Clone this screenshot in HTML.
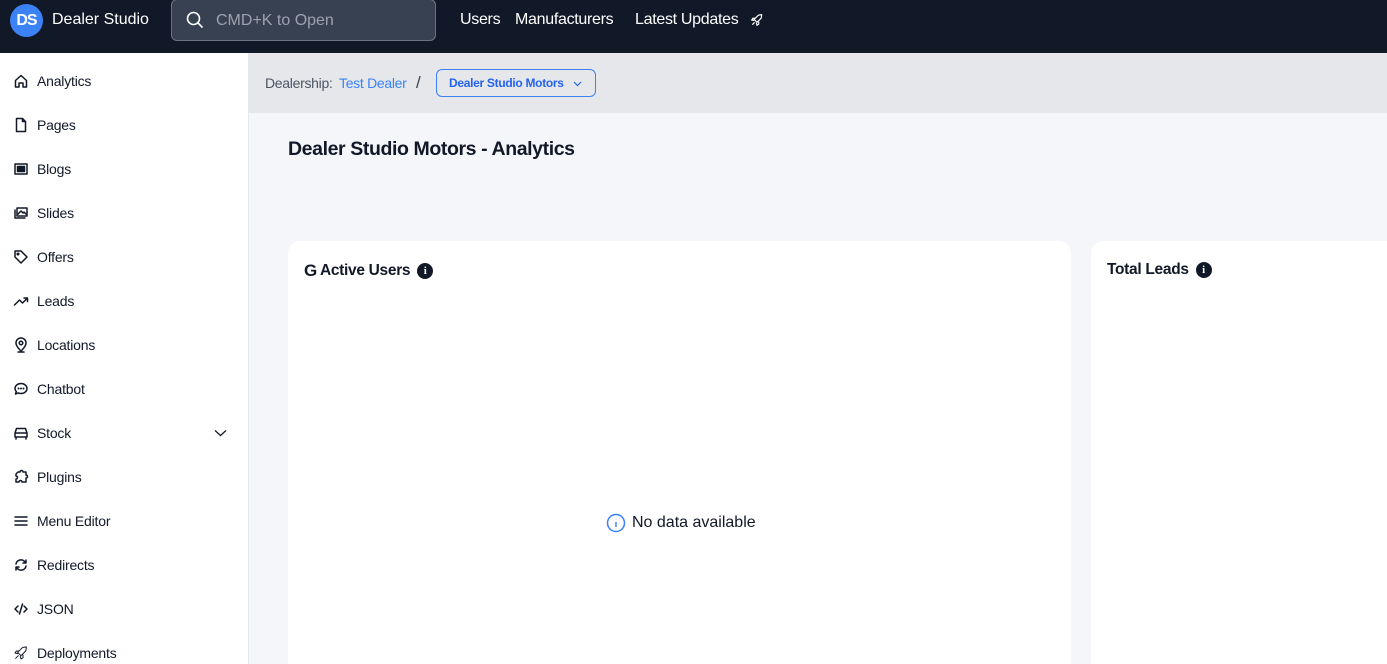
<!DOCTYPE html>
<html><head><meta charset="utf-8"><style>
*{box-sizing:border-box;margin:0;padding:0}
html,body{width:1387px;height:664px;overflow:hidden}
body{font-family:"Liberation Sans",sans-serif;background:#f5f6fa;position:relative;color:#111827}
.top{position:absolute;left:0;top:0;width:1387px;height:53px;background:#111827;color:#fff}
.logo{position:absolute;left:10px;top:4px;width:33px;height:33px;border-radius:50%;background:#3b82f6;color:#fff;font-weight:bold;font-size:16px;line-height:33px;text-align:center;letter-spacing:-1px}
.brand{position:absolute;left:52px;top:11px;font-size:16px}
.search{position:absolute;left:171px;top:-1px;width:265px;height:42px;border:1px solid #6b7280;border-radius:6px;background:#374151}
.search span{position:absolute;left:44px;top:12px;color:#9ca3af;font-size:16px}
.nav{position:absolute;top:11px;font-size:16px;letter-spacing:-.3px}
.side{position:absolute;left:0;top:53px;width:249px;height:611px;background:#fff;border-right:1px solid #e5e7eb}
.item{position:absolute;left:13px;height:20px;display:flex;align-items:center;font-size:14px;color:#111827;letter-spacing:-.2px}
.item svg{width:16px;height:16px;margin-right:8px;fill:none;stroke:#111827;stroke-width:1.5;stroke-linecap:round;stroke-linejoin:round}
.crumb{position:absolute;left:249px;top:53px;width:1138px;height:60px;background:#e5e7eb}
.card{position:absolute;top:241px;height:423px;background:#fff;border-radius:12px 12px 0 0}
.ct{position:absolute;top:20px;font-size:15.5px;font-weight:bold;display:flex;align-items:center;letter-spacing:-.3px}
.info{display:inline-block;width:16px;height:16px;border-radius:50%;background:#111827;color:#fff;font-size:11px;font-weight:bold;text-align:center;line-height:16px;margin-left:7px;font-family:"Liberation Serif",serif;letter-spacing:0}
</style></head><body>
<div class="top">
<div class="logo">DS</div><div class="brand">Dealer Studio</div>
<div class="search"><svg style="position:absolute;left:14px;top:11px" width="18" height="18" viewBox="0 0 18 18" fill="none" stroke="#fff" stroke-width="1.6"><circle cx="7.5" cy="7.5" r="6"/><path d="M12 12l4.5 4.5"/></svg><span>CMD+K to Open</span></div>
<div class="nav" style="left:460px">Users</div>
<div class="nav" style="left:515px">Manufacturers</div>
<div class="nav" style="left:635px">Latest Updates</div>
<svg style="position:absolute;left:750px;top:13px" width="14" height="14" viewBox="0 0 24 24" fill="none" stroke="#fff" stroke-width="2"><path d="M4 20l4-4M14 4c3-1 6-1 6-1s0 3-1 6l-7 7-5-5 7-7zM9 9H5l-2 3 4 1M15 15v4l-3 2-1-4"/></svg>
</div>
<div class="side">
<div class="item" style="top:18px"><svg viewBox="0 0 16 16"><path d="M2.5 7.5L8 2.5l5.5 5V14h-3.5v-4h-4v4H2.5z"/></svg>Analytics</div>
<div class="item" style="top:62px"><svg viewBox="0 0 16 16"><path d="M3.5 1.5h6l3 3v10h-9z M9.5 1.5v3h3"/></svg>Pages</div>
<div class="item" style="top:106px"><svg viewBox="0 0 16 16"><rect x="2" y="3" width="12" height="10"/><rect x="4.5" y="5.5" width="7" height="5" fill="#111827"/></svg>Blogs</div>
<div class="item" style="top:150px"><svg viewBox="0 0 16 16"><rect x="4" y="3" width="10" height="8"/><path d="M2 5v8h10M5 9l3-3 2 2 1-1 2 2"/></svg>Slides</div>
<div class="item" style="top:194px"><svg viewBox="0 0 16 16"><path d="M2 2h6l6 6-6 6-6-6z"/><circle cx="5" cy="5" r=".8"/></svg>Offers</div>
<div class="item" style="top:238px"><svg viewBox="0 0 16 16"><path d="M1.5 12l5-5 3 3 5-5M11 5h3.5v3.5"/></svg>Leads</div>
<div class="item" style="top:282px"><svg viewBox="0 0 16 16"><path d="M8 14s-5-4.5-5-8a5 5 0 0110 0c0 3.5-5 8-5 8zM5 15h6"/><circle cx="8" cy="6" r="1.8"/></svg>Locations</div>
<div class="item" style="top:326px"><svg viewBox="0 0 16 16"><path d="M8 2.5c3.3 0 6 2.2 6 5s-2.7 5-6 5c-1 0-2-.2-2.8-.6L2.5 13l.8-2.5C2.5 9.7 2 8.6 2 7.5c0-2.8 2.7-5 6-5z"/><path d="M5.5 7.5h.01M8 7.5h.01M10.5 7.5h.01" stroke-width="2"/></svg>Chatbot</div>
<div class="item" style="top:370px"><svg viewBox="0 0 16 16"><path d="M2 8l1.5-4.5h9L14 8v4H2zM2 8h12M3 12v2M13 12v2"/></svg>Stock</div>
<svg style="position:absolute;left:214px;top:375px" width="13" height="10" viewBox="0 0 13 10" fill="none" stroke="#111827" stroke-width="1.3"><path d="M1 2.5l5.5 5 5.5-5"/></svg>
<div class="item" style="top:414px"><svg viewBox="0 0 16 16"><path d="M5 3h2a1.5 1.5 0 013 0h3v3a1.5 1.5 0 010 3v4H9a1.5 1.5 0 00-3 0H3v-3a1.5 1.5 0 000-3V5l2-2z"/></svg>Plugins</div>
<div class="item" style="top:458px"><svg viewBox="0 0 16 16"><path d="M2 4h12M2 8h12M2 12h12"/></svg>Menu Editor</div>
<div class="item" style="top:502px"><svg viewBox="0 0 16 16"><path d="M3 7a5 5 0 019-2l1 1M13 3v3h-3M13 9a5 5 0 01-9 2l-1-1M3 13v-3h3"/></svg>Redirects</div>
<div class="item" style="top:546px"><svg viewBox="0 0 16 16"><path d="M5 5L2 8l3 3M11 5l3 3-3 3M9.5 3l-3 10"/></svg>JSON</div>
<div class="item" style="top:590px"><svg viewBox="0 0 24 24"><path d="M4 20l4-4M14 4c3-1 6-1 6-1s0 3-1 6l-7 7-5-5 7-7zM9 9H5l-2 3 4 1M15 15v4l-3 2-1-4"/></svg>Deployments</div>
</div>
<div class="crumb">
<span style="position:absolute;left:16px;top:22px;font-size:14px;color:#4b5563;letter-spacing:-.3px">Dealership:</span>
<span style="position:absolute;left:90px;top:22px;font-size:14px;color:#3b82f6;letter-spacing:-.3px">Test Dealer</span>
<span style="position:absolute;left:167px;top:20px;font-size:17px;color:#374151">/</span>
<div style="position:absolute;left:187px;top:16px;width:160px;height:28px;border:1px solid #3b82f6;border-radius:6px;color:#2563eb;font-size:12px;font-weight:bold"><span style="position:absolute;left:12px;top:6px;letter-spacing:-.3px">Dealer Studio Motors</span><svg style="position:absolute;left:136px;top:11px" width="9" height="6" viewBox="0 0 9 6" fill="none" stroke="#2563eb" stroke-width="1.2"><path d="M1 1l3.5 3.5L8 1"/></svg></div>
</div>
<div style="position:absolute;left:288px;top:138px;font-size:19.5px;font-weight:bold;letter-spacing:-.4px">Dealer Studio Motors - Analytics</div>
<div class="card" style="left:288px;width:783px">
<div class="ct" style="left:16px"><span style="font-size:17px;font-weight:900;margin-right:3px">G</span>Active Users<span class="info">i</span></div>
<div style="position:absolute;left:318px;top:272px;display:flex;align-items:center;font-size:16px"><svg width="20" height="20" viewBox="0 0 20 20" fill="none" stroke="#3b82f6" stroke-width="1.5" style="margin-right:6px"><circle cx="10" cy="10" r="8.5"/><path d="M10 9v5M10 6.2v.3"/></svg>No data available</div>
</div>
<div class="card" style="left:1091px;width:320px">
<div class="ct" style="left:16px">Total Leads<span class="info">i</span></div>
</div>
</body></html>
